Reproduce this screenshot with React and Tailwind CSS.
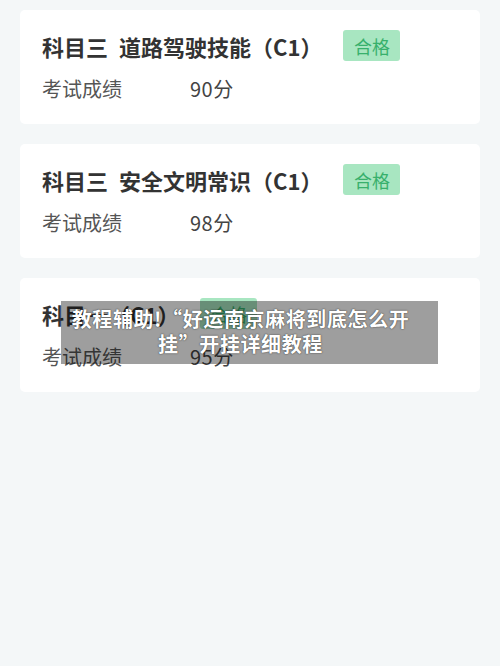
import React from 'react'

const results = [
  { title: '科目三\u2002道路驾驶技能（C1）', score: '90分' },
  { title: '科目三\u2002安全文明常识（C1）', score: '98分' },
  { title: '科目一（C1）', score: '95分' },
]

function ResultCard({ title, score }) {
  return (
    <div className="bg-white rounded-[5px] px-[22px] pt-[20px] pb-[21px]">
      {/* Title + badge */}
      <div className="flex items-center h-[31px]">
        <span className="text-[22px] leading-[30px] font-bold text-[#333333] whitespace-nowrap">{title}</span>
        <span className="ml-[21px] h-[31px] w-[57px] flex items-center justify-center rounded-[3px] bg-[#a8e6c1] text-[#38b06c] text-[18px] leading-none">
          合格
        </span>
      </div>
      {/* Score row */}
      <div className="flex items-center mt-[14px] h-[28px] text-[20px] leading-[28px] text-[#555555]">
        <span className="w-[148px]">考试成绩</span>
        <span className="text-[#444444] tracking-[0.5px]">{score}</span>
      </div>
    </div>
  )
}

export default function App() {
  return (
    <div
      className="relative min-h-[666px] bg-[#f4f7f8] px-[20px] pt-[10px]"
      style={{ fontFamily: '"Noto Sans CJK SC", "Noto Sans", sans-serif' }}
    >
      <div className="flex flex-col gap-[20px]">
        {results.map((r) => (
          <ResultCard key={r.score} title={r.title} score={r.score} />
        ))}
      </div>

      {/* Caption overlay */}
      <div className="absolute left-[61px] top-[301px] w-[377px] h-[63px] bg-black/[0.38] pl-[8px] pr-[26px] pt-[5px]">
        <p className="text-center text-white font-bold text-[20px] leading-[25px] tracking-[0.6px] whitespace-nowrap [text-shadow:0_0_1px_rgba(0,0,0,0.6),0_0_2px_rgba(0,0,0,0.4)]">
          教程辅助!“好运南京麻将到底怎么开
          <br />
          挂”开挂详细教程
        </p>
      </div>
    </div>
  )
}
